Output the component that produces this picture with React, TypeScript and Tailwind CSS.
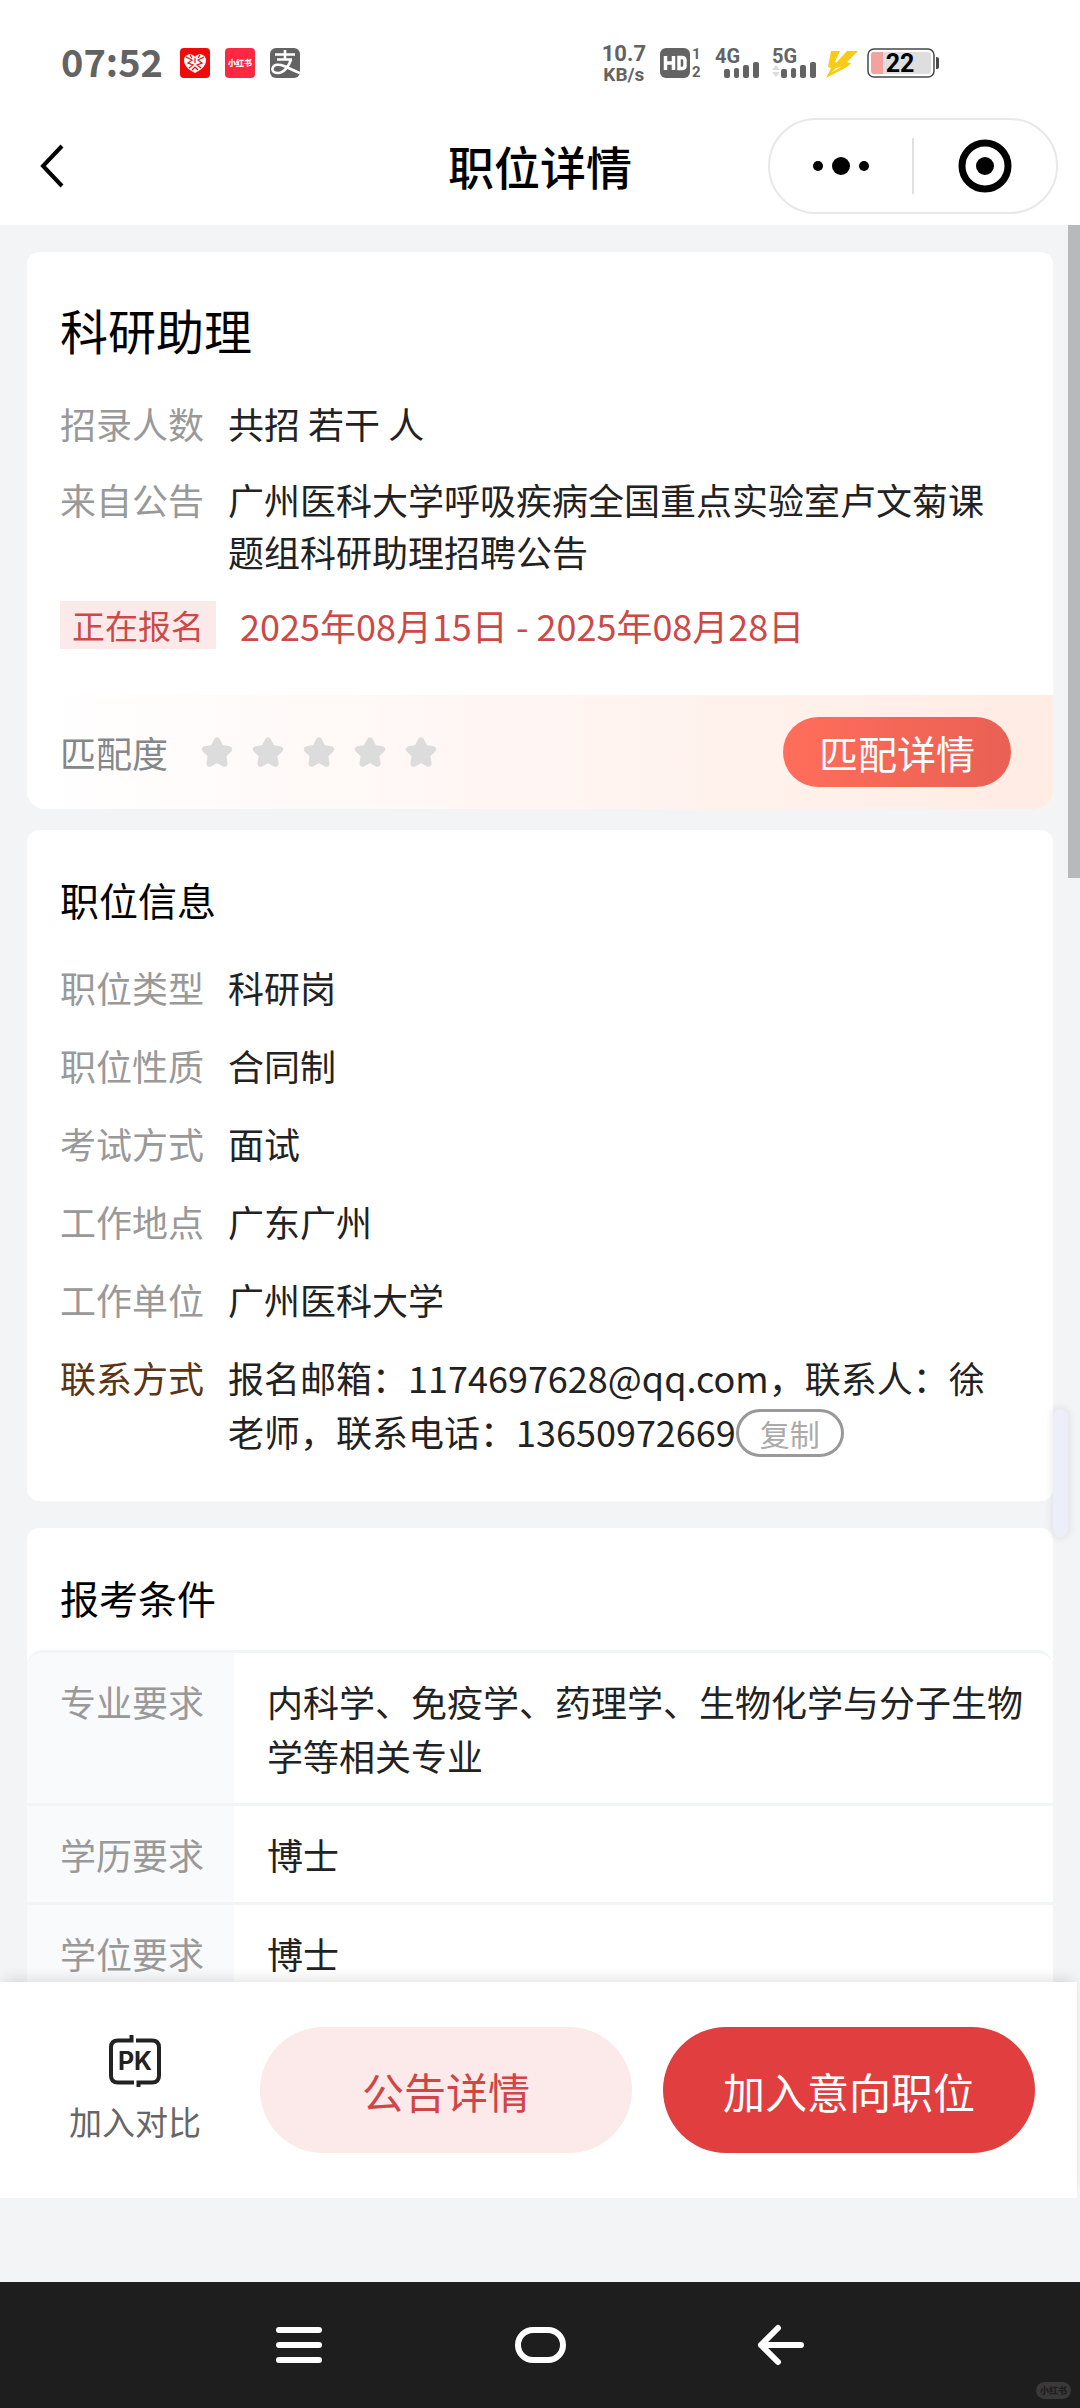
import type { ReactNode } from "react";
import { FaStar } from "react-icons/fa6";

const baseInfo = [
  { label: "职位类型", value: "科研岗" },
  { label: "职位性质", value: "合同制" },
  { label: "考试方式", value: "面试" },
  { label: "工作地点", value: "广东广州" },
  { label: "工作单位", value: "广州医科大学" },
];

const requirements = [
  { label: "专业要求", value: "内科学、免疫学、药理学、生物化学与分子生物学等相关专业" },
  { label: "学历要求", value: "博士" },
  { label: "学位要求", value: "博士" },
];

function Signal({ label, idle }: { label: string; idle?: boolean }) {
  return (
    <svg className="overflow-visible" width="45" height="30" viewBox="0 0 45 30" fill="#636363">
      <text x="0" y="15" fontSize="20" fontWeight="700">
        {label}
      </text>
      {idle && (
        <g fill="#dcdcdc">
          <path d="M0 22l4-5 4 5z" />
          <path d="M0 24l4 5 4-5z" />
        </g>
      )}
      <rect x="9" y="21" width="6" height="9" rx="2" />
      <rect x="19" y="20" width="5" height="10" rx="2" />
      <rect x="28" y="17" width="6" height="13" rx="2" />
      <rect x="38" y="14" width="6" height="16" rx="2" />
    </svg>
  );
}

function StatusBar() {
  return (
    <div className="flex h-[118px] items-start justify-between pt-12 pr-[141px] pl-[61px] text-[#636363]">
      <div className="flex h-[30px] items-center gap-[15px]">
        <span className="mr-0.5 pb-1 text-[38px] leading-[30px] font-bold">07:52</span>
        <svg width="30" height="30" viewBox="0 0 30 30">
          <rect width="30" height="30" rx="4" fill="#f20a0a" />
          <path d="M15 25C9 22 4 18 4 12c0-6 8-8 11-3 3-5 11-3 11 3 0 6-5 10-11 13z" fill="#fff" />
          <path
            d="M6 9l6 3-4 3 5 2-4 3M24 9l-6 3 4 3-5 2 4 3M15 10v5M12 22l3-3 3 3M10 7l2 3M20 7l-2 3"
            stroke="#f20a0a"
            strokeWidth="1.2"
            fill="none"
          />
        </svg>
        <span className="flex size-[30px] items-center justify-center rounded bg-[#ff2741] text-[8px] leading-none font-black text-white">
          小红书
        </span>
        <svg width="30" height="30" viewBox="0 0 30 30" fill="none" stroke="#fff">
          <rect width="30" height="30" rx="6" fill="#636363" stroke="none" />
          <path d="M5 6.500h20M15 2v9M7 11.500h15" strokeWidth="2.600" />
          <path
            d="M21 11.500C19 18 14 25 8 25c-4 0-6-2-5.500-4.500C3.500 16 9 16 14 18c5 2 10 5 16 7"
            strokeWidth="2.600"
          />
        </svg>
      </div>
      <div className="flex h-[30px] items-center font-[Roboto,sans-serif]">
        <div className="flex flex-col items-center font-bold">
          <span className="text-[22px] leading-[22px]">10.7</span>
          <span className="text-[19px] leading-[19px]">KB/s</span>
        </div>
        <svg className="ml-3.5 overflow-visible" width="43" height="30" viewBox="0 0 43 30" fill="#636363">
          <rect width="30" height="30" rx="6" />
          <path
            d="M5.500 8v14M13.500 8v14M5.500 15h8M19 9.500v11h3q3 0 3-3v-5q0-3-3-3z"
            stroke="#fff"
            strokeWidth="3.500"
            fill="none"
          />
          <text x="32" y="11" fontSize="15" fontWeight="700">
            1
          </text>
          <text x="32" y="29" fontSize="15" fontWeight="700">
            2
          </text>
        </svg>
        <div className="ml-3 flex gap-3">
          <Signal label="4G" />
          <Signal label="5G" idle />
        </div>
        <svg className="ml-2" width="34" height="30" viewBox="0 0 34 30" fill="#facb14">
          <path d="M6 3h9L10 14l1.500.5L22 3h11L22 14l4 1.500-5 4L1 30l5-10-3-1zM11 20l-4 4 9-5z" fillRule="evenodd" />
        </svg>
        <svg className="ml-2 overflow-visible" width="72" height="30" viewBox="0 0 72 30">
          <rect x="1" y="1" width="66" height="28" rx="6" fill="#fff" stroke="#484848" strokeWidth="1.500" />
          <rect x="4" y="4" width="60" height="22" rx="3" fill="#dedede" />
          <path d="M7 4h9v22H7q-3 0-3-3V7q0-3 3-3z" fill="#f2a29f" />
          <path d="M69 9q3 0 3 2v8q0 2-3 2z" fill="#484848" />
          <text x="33" y="24" fontSize="25" fontWeight="700" textAnchor="middle" fill="#000">
            22
          </text>
        </svg>
      </div>
    </div>
  );
}

function NavBar() {
  return (
    <div className="grid grid-cols-[1fr_auto_1fr] items-start pb-[11px]">
      <button type="button" aria-label="返回" className="flex h-24 w-24 items-center pl-10">
        <svg width="24" height="44" viewBox="0 0 24 44" fill="none" stroke="#000" strokeWidth="4">
          <path d="M22 2L3 22l19 20" />
        </svg>
      </button>
      <h1 className="text-[46px] leading-[94px] font-medium text-black">职位详情</h1>
      <div className="mr-[22px] flex h-24 w-[290px] items-center justify-self-end rounded-full border-2 border-[#e8e8e8]">
        <button type="button" aria-label="更多" className="flex flex-1 justify-center">
          <svg width="56" height="20" viewBox="0 0 56 20">
            <circle cx="5" cy="10" r="5" />
            <circle cx="28" cy="10" r="9" />
            <circle cx="51" cy="10" r="5" />
          </svg>
        </button>
        <span className="h-14 w-0.5 bg-[#e0e0e0]" />
        <button type="button" aria-label="关闭" className="flex flex-1 justify-center">
          <svg width="54" height="54" viewBox="0 0 54 54">
            <circle cx="27" cy="27" r="23" fill="none" stroke="#000" strokeWidth="7" />
            <circle cx="27" cy="27" r="9" />
          </svg>
        </button>
      </div>
    </div>
  );
}

function Row({ label, children, strong }: { label: string; children: ReactNode; strong?: boolean }) {
  return (
    <div className="flex">
      <dt className={strong ? "w-[168px] shrink-0 text-[#5b3516]" : "w-[168px] shrink-0 text-[#999999]"}>
        {label}
      </dt>
      <dd className="flex-1">{children}</dd>
    </div>
  );
}

function SummaryCard() {
  return (
    <section className="overflow-hidden rounded-xl rounded-b-[18px] bg-white">
      <div className="px-[33px] pt-[45px]">
        <h2 className="text-[48px] leading-[64px] text-black">科研助理</h2>
        <dl className="mt-9 flex flex-col gap-6 pr-6 text-[36px] leading-[52px]">
          <Row label="招录人数">共招 若干 人</Row>
          <Row label="来自公告">广州医科大学呼吸疾病全国重点实验室卢文菊课题组科研助理招聘公告</Row>
        </dl>
        <div className="mt-[22px] flex items-center gap-6 text-[#cb4a47]">
          <span className="bg-[#fceaeb] px-3 text-[33px] leading-[48px]">正在报名</span>
          <span className="text-[36px] leading-[52px]">2025年08月15日 - 2025年08月28日</span>
        </div>
      </div>
      <div className="mt-11 flex h-[114px] items-center bg-linear-to-r from-white via-[#fff5f2] to-[#ffece3] pr-[42px] pl-[33px]">
        <span className="text-[36px] leading-[52px] text-[#83888b]">匹配度</span>
        <div className="ml-[34px] flex gap-[21px] text-[#dcdcdc]">
          {[1, 2, 3, 4, 5].map((n) => (
            <FaStar
              key={n}
              size={30}
              stroke="currentColor"
              strokeWidth={56}
              strokeLinejoin="round"
              className="overflow-visible"
            />
          ))}
        </div>
        <button
          type="button"
          className="ml-auto h-[70px] rounded-full bg-linear-to-r from-[#ff6e5a] to-[#e96054] px-9 text-[39px] leading-[68px] text-white"
        >
          匹配详情
        </button>
      </div>
    </section>
  );
}

function InfoCard() {
  return (
    <section className="mt-[21px] rounded-xl bg-white px-[33px] pt-[42px] pb-[43px]">
      <h2 className="text-[39px] leading-[54px] text-black">职位信息</h2>
      <dl className="mt-[34px] flex flex-col gap-6 pr-6 text-[36px] leading-[54px] text-[#222222]">
        {baseInfo.map((item) => (
          <Row key={item.label} label={item.label}>
            {item.value}
          </Row>
        ))}
        <Row label="联系方式" strong>
          报名邮箱：1174697628@qq.com，联系人：徐老师，联系电话：13650972669
          <button
            type="button"
            className="mt-[5px] h-12 w-[108px] rounded-full border-3 border-[#999999] align-top text-[30px] leading-[42px] text-[#aaaaaa]"
          >
            复制
          </button>
        </Row>
      </dl>
    </section>
  );
}

function RequirementCard() {
  return (
    <section className="mt-[27px] rounded-t-xl bg-white pt-[42px]">
      <h2 className="px-[33px] text-[39px] leading-[54px] text-black">报考条件</h2>
      <div className="mt-[26px] overflow-hidden rounded-t-2xl border-t-3 border-[#f3f4f6]">
        <table className="w-full text-left align-top text-[36px] leading-[54px]">
          <tbody>
            {requirements.map((item) => (
              <tr key={item.label} className="border-b-3 border-[#f3f4f6]">
                <th className="w-[207px] bg-[#f9fafc] py-[21px] pl-[33px] align-top font-normal text-[#999999]">
                  {item.label}
                </th>
                <td className="py-[21px] pr-6 pl-[33px] align-top">{item.value}</td>
              </tr>
            ))}
          </tbody>
        </table>
      </div>
    </section>
  );
}

function ActionBar() {
  return (
    <div className="z-10 mr-[3px] flex h-[216px] items-center bg-white pr-[42px] pl-[69px] shadow-[0_-8px_12px_-4px_rgba(0,0,0,0.1)]">
      <button type="button" className="flex flex-col items-center text-[33px] leading-[48px] text-[#666666]">
        <svg className="mb-2.5" width="52" height="52" viewBox="0 0 52 52" fill="none">
          <path
            d="M22.500 0v5.500H9q-7 0-7 7v28q0 7 7 7h16M27 5.500h16q7 0 7 7v28q0 7-7 7H29.500V52"
            stroke="#222"
            strokeWidth="4"
          />
          <text
            x="26"
            y="35"
            fontSize="25"
            fontWeight="700"
            textAnchor="middle"
            fill="#222"
            className="font-[Inter,sans-serif]"
          >
            PK
          </text>
        </svg>
        加入对比
      </button>
      <div className="ml-[59px] flex flex-1 gap-[31px] text-[42px]">
        <button type="button" className="h-[126px] flex-1 rounded-full bg-[#fceaeb] text-[#d04545]">
          公告详情
        </button>
        <button type="button" className="h-[126px] flex-1 rounded-full bg-[#e13e3f] text-white">
          加入意向职位
        </button>
      </div>
    </div>
  );
}

function SystemNav() {
  return (
    <div className="relative flex h-[126px] items-center justify-center gap-[190px] bg-[#1e1e1e]">
      <button type="button" aria-label="菜单">
        <svg width="50" height="42" viewBox="0 0 50 42" stroke="#fff" strokeWidth="6" strokeLinecap="round">
          <path d="M5 6h40M5 21h40M5 36h40" />
        </svg>
      </button>
      <button type="button" aria-label="主页">
        <svg width="52" height="42" viewBox="0 0 52 42" fill="none" stroke="#fff" strokeWidth="6">
          <rect x="4" y="6" width="45" height="30" rx="15" />
        </svg>
      </button>
      <button type="button" aria-label="后退">
        <svg
          width="50"
          height="42"
          viewBox="0 0 50 42"
          fill="none"
          stroke="#fff"
          strokeWidth="6"
          strokeLinecap="round"
          strokeLinejoin="round"
        >
          <path d="M22 4L5 21l17 17M5 21h40" />
        </svg>
      </button>
      <span className="absolute right-[9px] bottom-[9px] rounded-full bg-[#393939] px-1 text-[9px] leading-[17px] font-black text-[#1e1e1e]">
        小红书
      </span>
    </div>
  );
}

export default function App() {
  return (
    <div className="flex h-dvh flex-col bg-[#f3f4f6] font-['Noto_Sans_CJK_SC',sans-serif] text-[#222222]">
      <header className="bg-white">
        <StatusBar />
        <NavBar />
      </header>
      <div className="relative flex min-h-0 flex-1 flex-col">
        <main className="min-h-0 flex-1 overflow-y-auto px-[27px] pt-[27px] [scrollbar-width:none]">
          <SummaryCard />
          <InfoCard />
          <RequirementCard />
        </main>
        <span className="absolute top-0 right-0 h-[653px] w-3 bg-[#b8b9bb]" />
        <span className="absolute top-[1184px] right-3 h-[128px] w-[15px] rounded-full bg-[#eceef9] shadow-[0_0_6px_3px_rgba(0,0,0,0.06)]" />
        <ActionBar />
      </div>
      <div className="h-[84px]" />
      <SystemNav />
    </div>
  );
}
